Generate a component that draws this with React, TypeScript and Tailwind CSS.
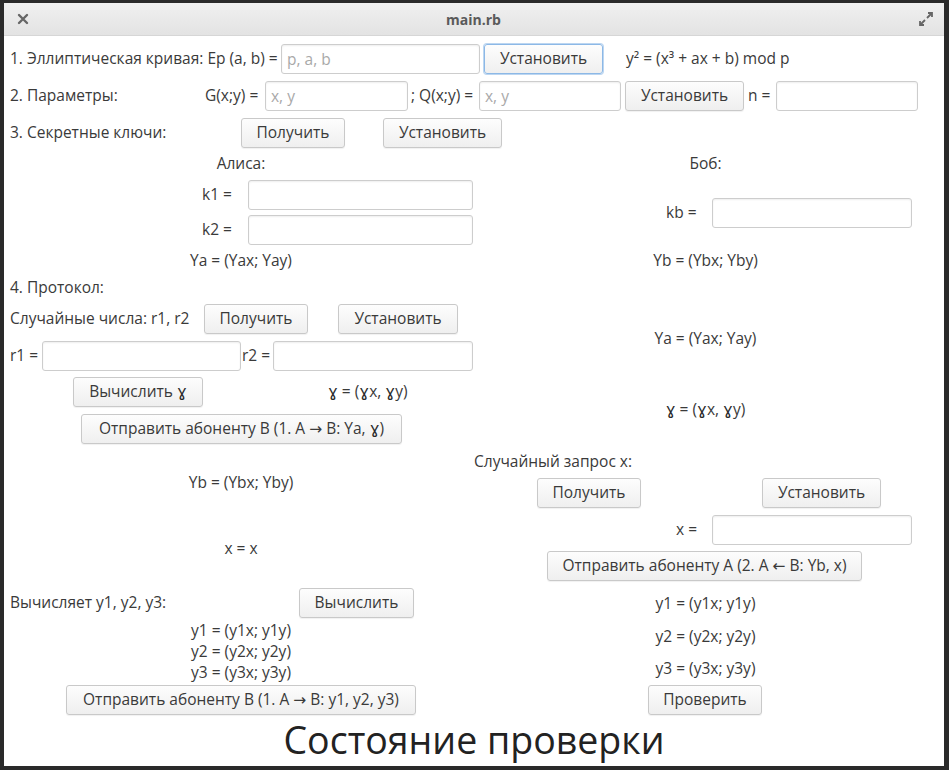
import React from 'react';

const font = { fontFamily: '"Open Sans", "DejaVu Sans", sans-serif' };

const Btn = ({ w, children, focus = false, className = '' }: { w: string; children: React.ReactNode; focus?: boolean; className?: string }) => (
  <button
    className={`${w} h-[30px] shrink-0 rounded-[3px] border ${
      focus ? 'border-[#8cb8e6] shadow-[0_0_0_1px_#bcd6f1]' : 'border-[#c9c9c9] shadow-[0_1px_1px_rgba(0,0,0,0.06)]'
    } bg-gradient-to-b from-[#fdfdfd] to-[#efefef] text-[15.5px] text-[#3a3a3a] whitespace-nowrap ${className}`}
  >
    {children}
  </button>
);

const Field = ({ w, placeholder = '' }: { w: string; placeholder?: string }) => (
  <input
    placeholder={placeholder}
    className={`${w} h-[30px] shrink-0 rounded-[3px] border border-[#cdcdcd] bg-white px-[5px] text-[15.5px] text-[#333] shadow-[inset_0_1px_2px_rgba(0,0,0,0.07)] outline-none placeholder:text-[#a9a9a9]`}
  />
);

const Label = ({ w, children, className = '' }: { w?: string; children: React.ReactNode; className?: string }) => (
  <span className={`${w ?? ''} shrink-0 whitespace-nowrap ${className}`}>{children}</span>
);

// centred text line inside a column
const Center = ({ h = 'h-[24px]', children, className = '' }: { h?: string; children: React.ReactNode; className?: string }) => (
  <div className={`${h} flex items-center justify-center whitespace-nowrap ${className}`}>
    <span>{children}</span>
  </div>
);

// the gamma glyph comes from a fallback font in the original
const G = () => <span className="font-['DejaVu_Sans',sans-serif] text-[16.5px] text-[#2a2a2a]">ɣ</span>;

export default function App() {
  return (
    <div className="w-[949px] h-[770px] bg-[#2a2a2a] pt-[3px] pl-[4px] pr-[5px] pb-[4px]" style={font}>
      <div className="flex h-full flex-col bg-white">
        {/* title bar */}
        <div className="flex h-[33px] shrink-0 items-center justify-between border-b border-[#d6d6d6] bg-gradient-to-b from-[#f0f0f0] to-[#e3e3e3] px-[12px]">
          <svg width="12" height="12" viewBox="0 0 12 12" className="ml-[1px]">
            <path d="M2 2 L10 10 M10 2 L2 10" stroke="#666" strokeWidth="2.4" strokeLinecap="round" />
          </svg>
          <span className="text-[14px] font-bold text-[#5a5a5a]">main.rb</span>
          <svg width="16" height="16" viewBox="0 0 16 16" className="mr-[-2px]">
            <path d="M9 7 L14 2 M10 2 H14 V6" stroke="#666" strokeWidth="1.8" fill="none" />
            <path d="M7 9 L2 14 M2 10 V14 H6" stroke="#666" strokeWidth="1.8" fill="none" />
          </svg>
        </div>

        <div className="flex flex-col text-[15.5px] text-[#3a3a3a]">
          {/* row 1 */}
          <div className="mt-[7px] flex h-[32px] items-center pl-[6px]">
            <Label w="w-[271px]">1. Эллиптическая кривая: Ep (a, b) =</Label>
            <Field w="w-[199px]" placeholder="p, a, b" />
            <Btn w="w-[119px]" focus className="ml-[4px]">Установить</Btn>
            <Label className="ml-[23px]">y² = (x³ + ax + b) mod p</Label>
          </div>

          {/* row 2 */}
          <div className="mt-[5px] flex h-[32px] items-center pl-[6px]">
            <Label w="w-[195px]">2. Параметры:</Label>
            <Label w="w-[60px]">G(x;y) =</Label>
            <Field w="w-[143px]" placeholder="x, y" />
            <Label w="w-[71px]" className="pl-[3px]">; Q(x;y) =</Label>
            <Field w="w-[142px]" placeholder="x, y" />
            <Btn w="w-[119px]" className="ml-[4px]">Установить</Btn>
            <Label w="w-[32px]" className="pl-[4px]">n =</Label>
            <Field w="w-[142px]" />
          </div>

          {/* row 3 */}
          <div className="mt-[5px] flex h-[32px] items-center pl-[6px]">
            <Label w="w-[231px]">3. Секретные ключи:</Label>
            <Btn w="w-[104px]">Получить</Btn>
            <Btn w="w-[119px]" className="ml-[38px]">Установить</Btn>
          </div>

          {/* keys: Alice / Bob */}
          <div className="mt-[2px] grid grid-cols-[470px_1fr]">
            <div className="flex flex-col pl-[4px]">
              <Center h="h-[26px]">Алиса:</Center>
              <div className="mt-[3px] flex h-[30px] items-center pl-[194px]">
                <Label w="w-[46px]">k1 =</Label>
                <Field w="w-[225px]" />
              </div>
              <div className="mt-[5px] flex h-[30px] items-center pl-[194px]">
                <Label w="w-[46px]">k2 =</Label>
                <Field w="w-[225px]" />
              </div>
              <Center className="mt-[4px]">Ya = (Yax; Yay)</Center>
            </div>
            <div className="flex flex-col pr-[7px]">
              <Center h="h-[26px]">Боб:</Center>
              <div className="mt-[20px] flex h-[31px] items-center pl-[192px]">
                <Label w="w-[46px]">kb =</Label>
                <Field w="w-[200px]" />
              </div>
              <Center className="mt-[21px]">Yb = (Ybx; Yby)</Center>
            </div>
          </div>

          <div className="mt-[3px] flex h-[24px] items-center pl-[6px]">4. Протокол:</div>

          {/* protocol */}
          <div className="mt-[1px] grid grid-cols-[470px_1fr]">
            <div className="flex flex-col">
              <div className="mt-[2px] flex h-[32px] items-center pl-[6px]">
                <Label w="w-[194px]">Случайные числа: r1, r2</Label>
                <Btn w="w-[104px]">Получить</Btn>
                <Btn w="w-[120px]" className="ml-[30px]">Установить</Btn>
              </div>
              <div className="mt-[5px] flex h-[32px] items-center pl-[6px]">
                <Label w="w-[32px]">r1 =</Label>
                <Field w="w-[199px]" />
                <Label w="w-[32px]" className="pl-[1px]">r2 =</Label>
                <Field w="w-[200px]" />
              </div>
              <div className="mt-[4px] flex h-[32px] items-center pl-[69px]">
                <Btn w="w-[130px]">Вычислить <G /></Btn>
                <Label className="ml-[125px]"><G /> = (<G />x, <G />y)</Label>
              </div>
              <div className="mt-[5px] flex h-[32px] items-center pl-[77px]">
                <Btn w="w-[321px]">Отправить абоненту B (1. A → B: Ya, <G />)</Btn>
              </div>
              <Center className="mt-[26px] pl-[4px]">Yb = (Ybx; Yby)</Center>
              <Center className="mt-[42px] pl-[4px]">x = x</Center>
              <div className="mt-[26px] flex h-[32px] items-center pl-[6px]">
                <Label w="w-[289px]">Вычисляет y1, y2, y3:</Label>
                <Btn w="w-[115px]">Вычислить</Btn>
              </div>
              <div className="mt-[1px] flex flex-col pl-[4px]">
                <Center h="h-[21px]">y1 = (y1x; y1y)</Center>
                <Center h="h-[21px]">y2 = (y2x; y2y)</Center>
                <Center h="h-[21px]">y3 = (y3x; y3y)</Center>
              </div>
              <div className="mt-[2px] flex h-[30px] items-center pl-[62px]">
                <Btn w="w-[350px]">Отправить абоненту B (1. A → B: y1, y2, y3)</Btn>
              </div>
            </div>

            <div className="flex flex-col">
              <Center className="mt-[26px] pr-[7px]">Ya = (Yax; Yay)</Center>
              <Center className="mt-[47px] pr-[7px]"><G /> = (<G />x, <G />y)</Center>
              <div className="mt-[28px] flex h-[24px] items-center">Случайный запрос x:</div>
              <div className="mt-[4px] flex h-[30px] items-center pl-[63px]">
                <Btn w="w-[104px]">Получить</Btn>
                <Btn w="w-[119px]" className="ml-[121px]">Установить</Btn>
              </div>
              <div className="mt-[7px] flex h-[30px] items-center pl-[202px]">
                <Label w="w-[36px]">x =</Label>
                <Field w="w-[200px]" />
              </div>
              <div className="mt-[6px] flex h-[30px] items-center pl-[73px]">
                <Btn w="w-[315px]">Отправить абоненту A (2. A ← B: Yb, x)</Btn>
              </div>
              <Center className="mt-[11px] pr-[7px]">y1 = (y1x; y1y)</Center>
              <Center className="mt-[9px] pr-[7px]">y2 = (y2x; y2y)</Center>
              <Center className="mt-[8px] pr-[7px]">y3 = (y3x; y3y)</Center>
              <div className="mt-[4px] flex h-[30px] items-center pl-[174px]">
                <Btn w="w-[114px]">Проверить</Btn>
              </div>
            </div>
          </div>

          <div className="mt-[1px] flex h-[48px] items-center justify-center text-[37.5px] text-[#222]">
            Состояние проверки
          </div>
        </div>
      </div>
    </div>
  );
}
